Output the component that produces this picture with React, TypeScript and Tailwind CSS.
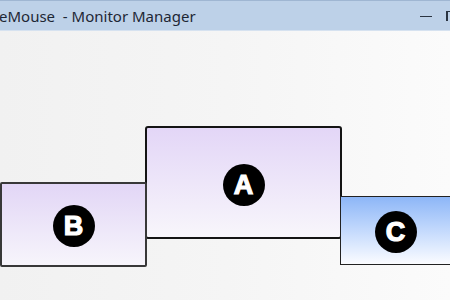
import React from 'react';

type Monitor = {
  id: string;
  box: string;
  fill: string;
  badge: string;
};

// positions are relative to the canvas under the title bar
const monitors: Monitor[] = [
  {
    id: 'A',
    box: 'left-[145px] top-[95px] w-[197px] h-[113px] border-[2.5px] border-[#141414] rounded-[3px]',
    fill: 'bg-gradient-to-b from-[#e3d6f7] to-[#f8f6fb]',
    badge: 'pt-[36px]',
  },
  {
    id: 'B',
    box: 'left-0 top-[151px] w-[147px] h-[85px] border-[2.5px] border-[#383838] rounded-[2px]',
    fill: 'bg-gradient-to-b from-[#e2d6f6] to-[#f7f5fb]',
    badge: 'pt-[21px]',
  },
  {
    id: 'C',
    box: 'left-[340px] top-[165px] w-[110px] h-[69px] border border-[#222] border-r-0',
    fill: 'bg-gradient-to-b from-[#8db6f7] to-[#fbfcff]',
    badge: 'pt-[14px]',
  },
];

function Badge({ letter }: { letter: string }) {
  return (
    <div className="w-[42px] h-[42px] rounded-full bg-black flex items-center justify-center">
      <span className="text-white text-[27px] font-bold leading-none font-['Liberation_Sans',sans-serif] [-webkit-text-stroke:1.2px_white]">
        {letter}
      </span>
    </div>
  );
}

export default function App() {
  return (
    <div className="w-[450px] h-[300px] flex flex-col overflow-hidden font-['Noto_Sans',sans-serif]">
      {/* title bar */}
      <div className="h-[31px] shrink-0 bg-[#bdd1e8] border-t border-[#9fb6d2] border-b border-b-[#d6e2f0] flex items-center">
        <span className="text-[15px] text-[#1d2735] leading-none -ml-[1px] mt-[2px] whitespace-pre">
          eMouse  - Monitor Manager
        </span>
        <div className="ml-auto flex items-center gap-[14px]">
          <div className="w-[12px] h-[1.5px] bg-[#2a3442] mt-[2px]" />
          <div className="w-[6px] h-[10px] border-l-2 border-t border-[#2a3442] -mr-[2px]" />
        </div>
      </div>

      {/* arrangement canvas */}
      <div className="relative flex-1 bg-gradient-to-r from-[#f1f1f1] via-[#f5f5f5] to-[#fbfbfb]">
        {monitors.map((m) => (
          <div key={m.id} className={`absolute ${m.box} ${m.fill} flex justify-center ${m.badge}`}>
            <Badge letter={m.id} />
          </div>
        ))}
      </div>
    </div>
  );
}
